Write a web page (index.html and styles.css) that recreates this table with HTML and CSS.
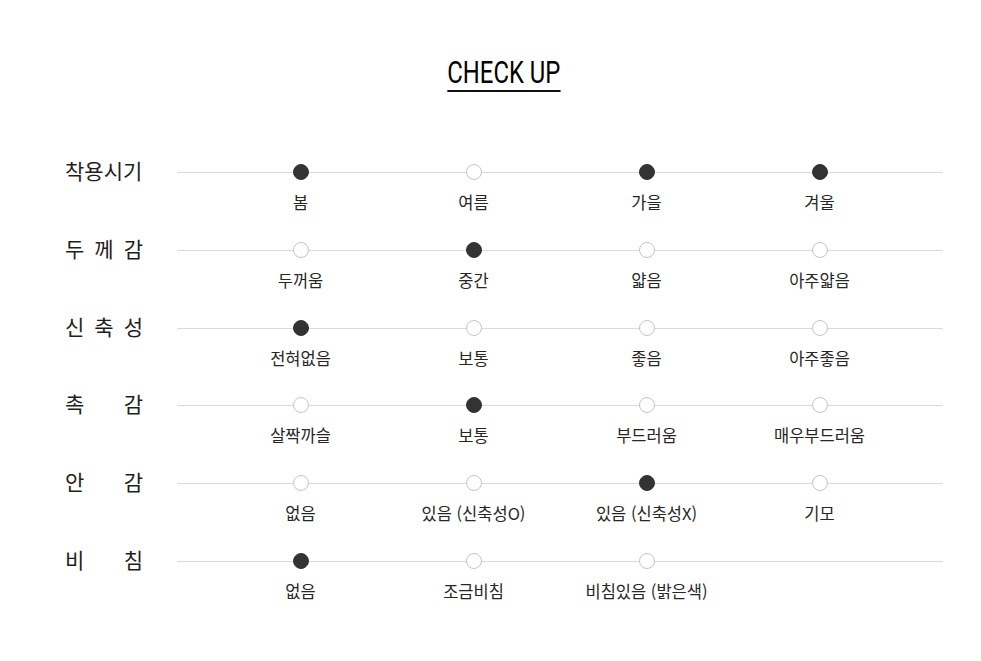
FILE: index.html
```html
<!DOCTYPE html>
<html lang="ko">
<head>
<meta charset="utf-8">
<title>CHECK UP</title>
<link rel="stylesheet" href="styles.css">
</head>
<body>
<div class="page">
  <div class="title-wrap"><h1 class="title">CHECK UP</h1></div>
  <div class="rows">
    <div class="row">
      <div class="label">착용시기</div>
      <div class="track">
        <div class="opt"><span class="dot on"></span><span class="txt">봄</span></div>
        <div class="opt"><span class="dot"></span><span class="txt">여름</span></div>
        <div class="opt"><span class="dot on"></span><span class="txt">가을</span></div>
        <div class="opt"><span class="dot on"></span><span class="txt">겨울</span></div>
      </div>
    </div>
    <div class="row">
      <div class="label">두 께 감</div>
      <div class="track">
        <div class="opt"><span class="dot"></span><span class="txt">두꺼움</span></div>
        <div class="opt"><span class="dot on"></span><span class="txt">중간</span></div>
        <div class="opt"><span class="dot"></span><span class="txt">얇음</span></div>
        <div class="opt"><span class="dot"></span><span class="txt">아주얇음</span></div>
      </div>
    </div>
    <div class="row">
      <div class="label">신 축 성</div>
      <div class="track">
        <div class="opt"><span class="dot on"></span><span class="txt">전혀없음</span></div>
        <div class="opt"><span class="dot"></span><span class="txt">보통</span></div>
        <div class="opt"><span class="dot"></span><span class="txt">좋음</span></div>
        <div class="opt"><span class="dot"></span><span class="txt">아주좋음</span></div>
      </div>
    </div>
    <div class="row">
      <div class="label">촉 감</div>
      <div class="track">
        <div class="opt"><span class="dot"></span><span class="txt">살짝까슬</span></div>
        <div class="opt"><span class="dot on"></span><span class="txt">보통</span></div>
        <div class="opt"><span class="dot"></span><span class="txt">부드러움</span></div>
        <div class="opt"><span class="dot"></span><span class="txt">매우부드러움</span></div>
      </div>
    </div>
    <div class="row">
      <div class="label">안 감</div>
      <div class="track">
        <div class="opt"><span class="dot"></span><span class="txt">없음</span></div>
        <div class="opt"><span class="dot"></span><span class="txt">있음 (신축성O)</span></div>
        <div class="opt"><span class="dot on"></span><span class="txt">있음 (신축성X)</span></div>
        <div class="opt"><span class="dot"></span><span class="txt">기모</span></div>
      </div>
    </div>
    <div class="row">
      <div class="label">비 침</div>
      <div class="track">
        <div class="opt"><span class="dot on"></span><span class="txt">없음</span></div>
        <div class="opt"><span class="dot"></span><span class="txt">조금비침</span></div>
        <div class="opt"><span class="dot"></span><span class="txt">비침있음 (밝은색)</span></div>
        <div class="opt"></div>
      </div>
    </div>
  </div>
</div>
</body>
</html>
```
FILE: styles.css
```css
html, body {
  margin: 0;
  padding: 0;
  background: #fff;
}
body {
  font-family: "Noto Sans CJK KR", "Noto Sans", sans-serif;
  color: #222;
}
.page {
  width: 878px;
  margin-left: 65px;
  padding-top: 56px;
}
.title-wrap {
  display: flex;
  justify-content: center;
}
.title {
  margin: 0;
  font-family: Roboto, "Liberation Sans", sans-serif;
  font-weight: 400;
  font-size: 32px;
  line-height: 32px;
  color: #000;
  padding-bottom: 2px;
  border-bottom: 2px solid #111;
  transform: scaleX(0.745);
}
.rows {
  margin-top: 72px;
  display: flex;
  flex-direction: column;
  gap: 29.8px;
}
.row {
  display: flex;
  align-items: flex-start;
  height: 48px;
}
.label {
  width: 78px;
  margin-right: 34px;
  font-size: 21px;
  line-height: 13px;
  height: 16px;
  text-align: justify;
  text-align-last: justify;
  color: #1e1e1e;
  white-space: nowrap;
}
.track {
  flex: 1;
  display: grid;
  grid-template-columns: repeat(4, 1fr);
  padding: 0 37px;
  background: linear-gradient(#dadada, #dadada) no-repeat 0 8px / 100% 1px;
}
.opt {
  display: flex;
  flex-direction: column;
  align-items: center;
}
.dot {
  width: 16px;
  height: 16px;
  box-sizing: border-box;
  border-radius: 50%;
  background: #fff;
  border: 1px solid #c4c4c4;
}
.dot.on {
  background: #333;
  border-color: #333;
}
.txt {
  margin-top: 12px;
  font-size: 16.5px;
  line-height: 20px;
  color: #262626;
  white-space: nowrap;
}
```
